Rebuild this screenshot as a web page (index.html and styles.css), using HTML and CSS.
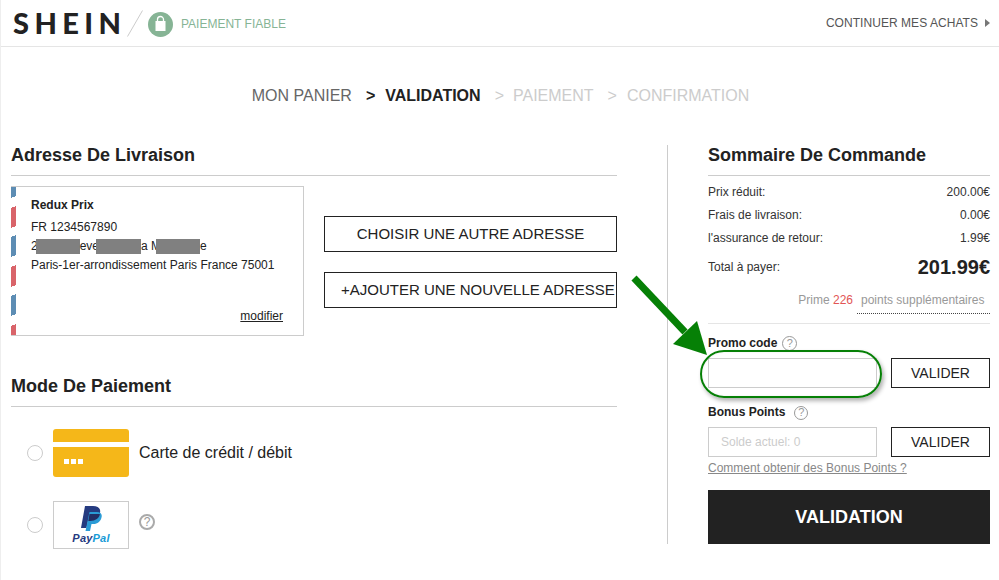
FILE: index.html
```html
<!DOCTYPE html>
<html lang="fr">
<head>
<meta charset="utf-8">
<title>SHEIN - Validation</title>
<link rel="stylesheet" href="styles.css">
</head>
<body>
<div class="page">
  <header class="top">
    <div class="brand">
      <span class="logo">SHEIN</span>
      <svg class="slash" width="16" height="27" viewBox="0 0 16 27"><line x1="15.500" y1="0.500" x2="0.500" y2="26.500" stroke="#ccc" stroke-width="1"/></svg>
      <svg class="lock" width="25" height="25" viewBox="0 0 25 25"><circle cx="12.500" cy="12.500" r="12.500" fill="#86b495"/><path d="M9.500 10V7.500a3 3 0 0 1 6 0V10" fill="none" stroke="#fff" stroke-width="1.300"/><rect x="7.500" y="9" width="10" height="10" fill="#fff"/></svg>
      <span class="trust">PAIEMENT FIABLE</span>
    </div>
    <div class="continue">CONTINUER MES ACHATS <span class="tri"></span></div>
  </header>

  <nav class="steps">
    <span class="done">MON PANIER</span>
    <span class="sep on">&gt;</span>
    <span class="cur">VALIDATION</span>
    <span class="sep mid">&gt;</span>
    <span class="todo">PAIEMENT</span>
    <span class="sep">&gt;</span>
    <span class="todo">CONFIRMATION</span>
  </nav>

  <main class="main">
    <section class="left">
      <h2 class="title">Adresse De Livraison</h2>
      <div class="addr-row">
        <div class="addr-card">
          <div class="stripes"></div>
          <div class="addr-body">
            <div class="name">Redux Prix</div>
            <div class="line">FR 1234567890</div>
            <div class="line masked">2<i class="blk b1"></i>eve<i class="blk b2"></i>a M<i class="blk b3"></i>e</div>
            <div class="line">Paris-1er-arrondissement Paris France 75001</div>
            <a class="modify">modifier</a>
          </div>
        </div>
        <div class="addr-actions">
          <button class="outline raised">CHOISIR UNE AUTRE ADRESSE</button>
          <button class="outline raised tight">+AJOUTER UNE NOUVELLE ADRESSE</button>
        </div>
      </div>

      <h2 class="title pay-title">Mode De Paiement</h2>
      <div class="pay-row first">
        <span class="radio"></span>
        <svg class="card" width="76" height="48" viewBox="0 0 76 48"><path d="M3 0h70a3 3 0 0 1 3 3v10H0V3a3 3 0 0 1 3-3z" fill="#f5b719"/><path d="M0 18h76v27a3 3 0 0 1-3 3H3a3 3 0 0 1-3-3z" fill="#f5b719"/><rect x="11" y="30" width="5" height="5" fill="#fff"/><rect x="18" y="30" width="5" height="5" fill="#fff"/><rect x="25" y="30" width="5" height="5" fill="#fff"/></svg>
        <span class="pay-label">Carte de crédit / débit</span>
      </div>
      <div class="pay-row second">
        <span class="radio"></span>
        <div class="pp-box">
          <svg width="21" height="25" viewBox="0 0 21 25"><path d="M4 0h8c5 0 8 2.500 7 7-1 5-5 8-10 8H7l-1.500 7H0z" fill="#253b80"/><path d="M8.500 6h7.500c3.500 0 5.500 2 4.500 5.500-1 4-4 6.500-8 6.500h-2l-1.500 7H4.500z" fill="#2a9bd6"/><path d="M7.300 14.900 8.500 8h10.400c-.5 4-4.400 7-9.900 7z" fill="#222d65"/></svg>
          <span class="pp-text"><b>Pay</b><em>Pal</em></span>
        </div>
        <span class="help big">?</span>
      </div>
    </section>

    <aside class="right">
      <h2 class="title">Sommaire De Commande</h2>
      <div class="sum-row"><span>Prix réduit:</span><span>200.00€</span></div>
      <div class="sum-row"><span>Frais de livraison:</span><span>0.00€</span></div>
      <div class="sum-row"><span>l'assurance de retour:</span><span>1.99€</span></div>
      <div class="total-row"><span>Total à payer:</span><strong>201.99€</strong></div>
      <div class="prime"><span class="prime-a">Prime <em>226</em></span><span class="prime-b">points supplémentaires</span></div>
      <div class="field-label promo">Promo code<span class="help">?</span></div>
      <div class="field-row">
        <input class="input" type="text">
        <button class="outline small">VALIDER</button>
      </div>
      <div class="field-label bonus">Bonus Points<span class="help wide">?</span></div>
      <div class="field-row">
        <input class="input" type="text" placeholder="Solde actuel: 0">
        <button class="outline small">VALIDER</button>
      </div>
      <a class="how">Comment obtenir des Bonus Points ?</a>
      <button class="go">VALIDATION</button>
    </aside>
  </main>

  <svg class="note-arrow" width="90" height="90" viewBox="0 0 90 90"><path d="M9 8 L60 62" stroke="#068006" stroke-width="7" fill="none"/><polygon points="82,85 48,74 72,51" fill="#068006"/></svg>
  <div class="note-ring"></div>
</div>
</body>
</html>
```

FILE: styles.css
```css
* { box-sizing: border-box; }
html, body { margin: 0; padding: 0; background: #fff; }
body { font-family: "Liberation Sans", Arial, sans-serif; color: #222; }
.page { position: relative; width: 999px; height: 580px; overflow: hidden; border-left: 1px solid #eee; }

.top { height: 47px; border-bottom: 1px solid #e5e5e5; display: flex; justify-content: space-between; align-items: center; padding: 0 9px 0 12px; }
.brand { display: flex; align-items: center; }
.logo { font-family: "Lato", "Liberation Sans", sans-serif; font-weight: 900; font-size: 29px; line-height: 30px; letter-spacing: 5.4px; color: #222; width: 114px; }
.slash { margin: 0 5px 0 0; }
.lock { margin: 2px 8px 0 0; }
.trust { font-size: 12px; color: #86b495; margin-top: 2px; }
.continue { font-size: 12px; letter-spacing: .05px; color: #555; display: flex; align-items: center; gap: 7px; }
.tri { width: 0; height: 0; border-left: 5px solid #777; border-top: 4px solid transparent; border-bottom: 4px solid transparent; }

.steps { display: flex; justify-content: center; font-size: 16px; line-height: 18px; margin-top: 40px; padding-left: 1px; color: #ccc; }
.done { color: #666; }
.cur { color: #222; font-weight: 700; }
.sep { color: #ccc; margin: 0 10px 0 14px; }
.sep.mid { margin-right: 9px; }
.sep.on { color: #222; font-weight: 700; }
.todo { color: #ccc; }

.main { display: flex; margin-top: 40px; padding-left: 10px; }
.left { width: 606px; }
.right { width: 323px; margin-left: 50px; padding-left: 40px; border-left: 1px solid #ccc; height: 399px; }

.title { font-size: 18px; font-weight: 700; line-height: 21px; margin: 0; padding-bottom: 9px; border-bottom: 1px solid #ccc; color: #222; }

.addr-row { display: flex; margin-top: 10px; }
.addr-card { width: 293px; height: 150px; border: 1px solid #ccc; border-left: 0; display: flex; }
.stripes { width: 5px; height: 100%; background: repeating-linear-gradient(160deg, #5d8db4 0 10.300px, #fff 10.300px 19.700px, #d9646a 19.700px 38.500px, #fff 38.500px 46.900px, #5d8db4 46.900px 55.400px); }
.addr-body { position: relative; flex: 1; padding: 11px 0 0 15px; font-size: 12px; color: #222; }
.name { font-weight: 700; line-height: 14px; margin-bottom: 8px; }
.line { line-height: 14px; margin-bottom: 5px; white-space: nowrap; }
.masked { display: flex; align-items: center; height: 14px; }
.blk { display: block; flex: none; height: 15px; background: #808080; }
.b1 { width: 44px; margin-left: -2px; }
.b2 { width: 45px; margin-left: -3px; }
.b3 { width: 44px; margin-left: -5px; }
.modify { position: absolute; right: 20px; bottom: 12px; text-decoration: underline; line-height: 14px; }
.addr-actions { display: flex; flex-direction: column; gap: 20px; margin: 30px 0 0 20px; }
button { font-family: inherit; cursor: pointer; }
.outline { width: 293px; height: 36px; border: 1px solid #222; background: #fff; color: #222; font-size: 15px; padding: 0; white-space: nowrap; }
.raised { padding-bottom: 2px; }
.tight { text-align: left; padding-left: 16px; }

.pay-title { margin-top: 40px; }
.pay-row { display: flex; align-items: center; padding-left: 16px; }
.first { margin-top: 22px; }
.second { margin-top: 24px; }
.radio { width: 16px; height: 16px; border: 1px solid #ccc; border-radius: 50%; margin-right: 10px; }
.card { margin-right: 10px; }
.pay-label { font-size: 16px; color: #222; margin-top: -1px; }
.pp-box { width: 76px; height: 48px; border: 1px solid #ccc; display: flex; flex-direction: column; align-items: center; padding-top: 4px; margin-right: 10px; }
.pp-text { font-size: 11px; letter-spacing: .2px; line-height: 11px; font-style: italic; font-weight: 700; margin-top: 2px; }
.pp-text b { color: #253b80; }
.pp-text em { color: #179bd7; }
.help { display: inline-flex; width: 15px; height: 15px; border: 1px solid #999; border-radius: 50%; color: #999; font-size: 11px; font-weight: 400; align-items: center; justify-content: center; margin-left: 5px; }
.help.wide { margin-left: 9px; width: 14px; height: 14px; }
.help.big { width: 16px; height: 16px; border: 2px solid #aaa; font-size: 12px; color: #999; margin: 0 0 6px; }

.right .title { width: 282px; }
.sum-row { display: flex; justify-content: space-between; font-size: 12px; line-height: 14px; margin-top: 9px; color: #333; width: 282px; }
.total-row { display: flex; justify-content: space-between; align-items: center; width: 282px; font-size: 12px; color: #333; margin-top: 10px; line-height: 24px; }
.total-row strong { font-size: 20px; color: #222; }
.prime { width: 282px; height: 31px; display: flex; justify-content: flex-end; align-items: flex-start; font-size: 12px; color: #999; line-height: 14px; margin-top: 14px; border-bottom: 1px solid #e5e5e5; }
.prime-a { margin-right: 4px; }
.prime-a em { color: #e25555; font-style: normal; }
.prime-b { width: 133px; height: 21px; padding-left: 4px; border-bottom: 1px dotted #444; }
.field-label { font-size: 12px; font-weight: 700; line-height: 15px; display: flex; align-items: center; }
.promo { margin-top: 12px; }
.bonus { margin-top: 17px; }
.field-row { display: flex; justify-content: space-between; width: 282px; margin-top: 7px; }
.input { width: 169px; height: 30px; border: 1px solid #ccc; padding: 0 12px; font-family: inherit; font-size: 12px; outline: 0; }
.input::placeholder { color: #ccc; opacity: 1; }
.small { width: 99px; height: 30px; font-size: 14px; }
.how { display: block; font-size: 12px; color: #888; text-decoration: underline; margin-top: 4px; line-height: 14px; }
.go { display: block; width: 282px; height: 54px; margin-top: 15px; background: #222; color: #fff; border: 0; font-size: 18px; font-weight: 700; }

.note-arrow { position: absolute; left: 624px; top: 270px; }
.note-ring { position: absolute; left: 699px; top: 350px; width: 182px; height: 48px; border: 2px solid #068006; border-radius: 24px; box-shadow: 2px 3px 4px rgba(0,0,0,.3), inset 0 0 2px rgba(0,0,0,.1); }
```
